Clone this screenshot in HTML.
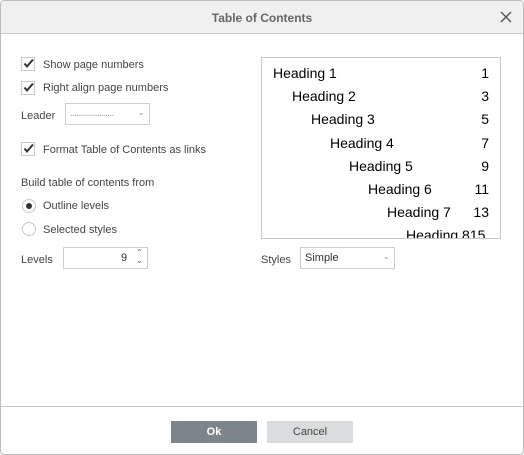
<!DOCTYPE html>
<html><head><style>
*{margin:0;padding:0;box-sizing:border-box}
body{width:524px;height:455px;background:#fff;font-family:"Liberation Sans",Arial,sans-serif;font-size:11px;color:#444;position:relative;overflow:hidden}
.dlg{position:absolute;left:0;top:0;width:524px;height:455px;border:1px solid #bcbcbc;border-radius:4px;overflow:hidden}
.in{position:absolute;left:-1px;top:-1px;width:524px;height:455px}
.hdr{position:absolute;left:1px;top:1px;width:522px;height:33px;background:#f0f0f0;border-bottom:1px solid #cbcbcb;text-align:center;line-height:34px;font-size:12px;color:#666;font-weight:bold}
.x{position:absolute;right:11px;top:10px;width:12px;height:12px}
.a{position:absolute;white-space:nowrap}
.t{position:absolute;white-space:nowrap;margin-top:1px}
.cb{position:absolute;width:14px;height:14px;border:1px solid #c8c8c8;background:#fff}
.rd{position:absolute;width:14px;height:14px;border:1px solid #c8c8c8;border-radius:50%;background:#fff}
.sel{position:absolute;border:1px solid #cfcfcf;background:#fff}
.prev{position:absolute;left:261px;top:57px;width:240px;height:182px;border:1px solid #c8c8c8;overflow:hidden;font-size:14px;color:#000}
.prev div{position:absolute;white-space:nowrap;margin-top:-1px}
.ft{position:absolute;left:0;top:406px;width:524px;border-top:1px solid #cbcbcb}
.btn{position:absolute;top:421px;height:22px;width:86px;text-align:center;line-height:22px;font-size:11px}
</style></head><body><div class="dlg"><div class="in">
<div class="hdr">Table of Contents
<svg class="x" viewBox="0 0 12 12"><path d="M1 1L11 11M11 1L1 11" stroke="#555" stroke-width="1.4"/></svg></div>

<div class="cb" style="left:21px;top:57px"></div><svg class="a" style="left:22px;top:57px" width="13" height="13" viewBox="0 0 13 13"><path d="M2.5 6.5L5 9.5L11 2.5" stroke="#333" stroke-width="2" fill="none"/></svg>
<div class="t" style="left:43px;top:58px">Show page numbers</div>
<div class="cb" style="left:21px;top:81px"></div><svg class="a" style="left:22px;top:81px" width="13" height="13" viewBox="0 0 13 13"><path d="M2.5 6.5L5 9.5L11 2.5" stroke="#333" stroke-width="2" fill="none"/></svg>
<div class="t" style="left:43px;top:81px">Right align page numbers</div>
<div class="t" style="left:21px;top:109px">Leader</div>
<div class="sel" style="left:65px;top:103px;width:85px;height:22px"><span class="a" style="left:4px;top:3px;color:#aaa;letter-spacing:-1px">.....................</span><span class="a" style="left:72px;top:4px;color:#999;font-size:8px">&#8964;</span></div>
<div class="cb" style="left:21px;top:142px"></div><svg class="a" style="left:22px;top:142px" width="13" height="13" viewBox="0 0 13 13"><path d="M2.5 6.5L5 9.5L11 2.5" stroke="#333" stroke-width="2" fill="none"/></svg>
<div class="t" style="left:43px;top:143px">Format Table of Contents as links</div>
<div class="t" style="left:21px;top:176px">Build table of contents from</div>
<div class="rd" style="left:22px;top:199px"></div><div class="a" style="left:26px;top:203px;width:6px;height:6px;border-radius:50%;background:#333"></div>
<div class="t" style="left:43px;top:199px">Outline levels</div>
<div class="rd" style="left:22px;top:222px"></div>
<div class="t" style="left:43px;top:223px">Selected styles</div>
<div class="t" style="left:21px;top:253px">Levels</div>
<div class="sel" style="left:63px;top:247px;width:85px;height:22px"><span class="a" style="left:57px;top:4px;color:#333">9</span><span class="a" style="left:72px;top:0px;color:#666;font-size:8px">&#8963;</span><span class="a" style="left:72px;top:8px;color:#666;font-size:8px">&#8964;</span></div>

<div class="prev">
<div style="left:11px;top:8px">Heading 1</div><div style="right:11px;top:8px">1</div>
<div style="left:30px;top:31px">Heading 2</div><div style="right:11px;top:31px">3</div>
<div style="left:49px;top:54px">Heading 3</div><div style="right:11px;top:54px">5</div>
<div style="left:68px;top:78px">Heading 4</div><div style="right:11px;top:78px">7</div>
<div style="left:87px;top:101px">Heading 5</div><div style="right:11px;top:101px">9</div>
<div style="left:106px;top:124px">Heading 6</div><div style="right:11px;top:124px">11</div>
<div style="left:125px;top:147px">Heading 7</div><div style="right:11px;top:147px">13</div>
<div style="left:144px;top:170px">Heading 815</div>
</div>
<div class="t" style="left:261px;top:253px">Styles</div>
<div class="sel" style="left:300px;top:247px;width:95px;height:22px"><span class="a" style="left:4px;top:4px;color:#333">Simple</span><span class="a" style="left:82px;top:4px;color:#999;font-size:8px">&#8964;</span></div>

<div class="ft"></div>
<div class="btn" style="left:171px;background:#7d858c;color:#fff;font-weight:bold">Ok</div>
<div class="btn" style="left:267px;background:#dadcdd;color:#444">Cancel</div>
</div></div></body></html>
